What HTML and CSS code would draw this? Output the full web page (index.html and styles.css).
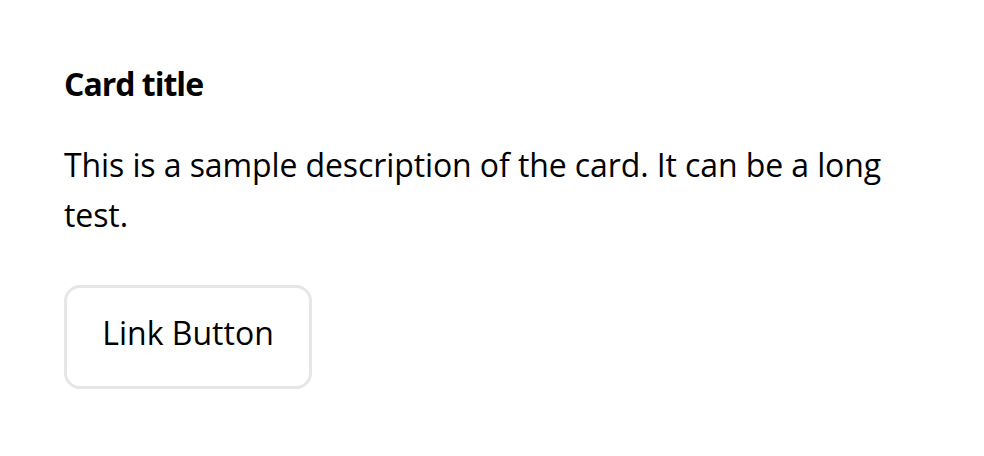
FILE: index.html
```html
<!DOCTYPE html>
<html>
<head>
<meta charset="utf-8">
<link rel="stylesheet" href="styles.css">
</head>
<body>
<div class="card">
  <h2 class="card-title">Card title</h2>
  <p class="card-text">This is a sample description of the card. It can be a long test.</p>
  <a class="card-button" href="#">Link Button</a>
</div>
</body>
</html>
```
FILE: styles.css
```css
html, body {
  margin: 0;
  padding: 0;
  background: #ffffff;
}
body {
  font-family: "Open Sans", "Noto Sans", sans-serif;
  color: #000;
}
.card {
  padding: 64px;
  display: flex;
  flex-direction: column;
  align-items: flex-start;
}
.card-title {
  margin: 0;
  font-size: 32px;
  font-weight: 700;
  line-height: 40px;
  letter-spacing: -1px;
}
.card-text {
  margin: 36px 0 0;
  font-size: 32px;
  line-height: 50px;
  letter-spacing: -0.1px;
}
.card-button {
  margin-top: 45px;
  box-sizing: border-box;
  width: 248px;
  padding: 25px 0 33px;
  display: block;
  text-align: center;
  border: 3px solid #e6e6e6;
  border-radius: 16px;
  font-size: 32px;
  line-height: 40px;
  color: #000;
  text-decoration: none;
}
```
